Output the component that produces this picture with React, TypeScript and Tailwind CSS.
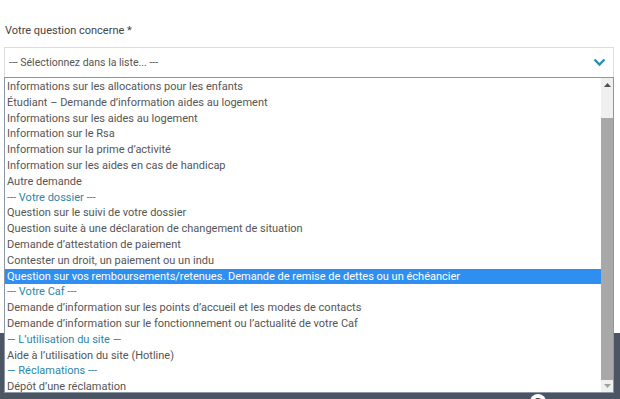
import React from "react";

type Item = { t: string; h?: boolean; sel?: boolean };

const items: Item[] = [
  { t: "Informations sur les allocations pour les enfants" },
  { t: "Étudiant – Demande d’information aides au logement" },
  { t: "Informations sur les aides au logement" },
  { t: "Information sur le Rsa" },
  { t: "Information sur la prime d’activité" },
  { t: "Information sur les aides en cas de handicap" },
  { t: "Autre demande" },
  { t: "--- Votre dossier ---", h: true },
  { t: "Question sur le suivi de votre dossier" },
  { t: "Question suite à une déclaration de changement de situation" },
  { t: "Demande d’attestation de paiement" },
  { t: "Contester un droit, un paiement ou un indu" },
  { t: "Question sur vos remboursements/retenues. Demande de remise de dettes ou un échéancier", sel: true },
  { t: "--- Votre Caf ---", h: true },
  { t: "Demande d’information sur les points d’accueil et les modes de contacts" },
  { t: "Demande d’information sur le fonctionnement ou l’actualité de votre Caf" },
  { t: "— L’utilisation du site —", h: true },
  { t: "Aide à l’utilisation du site (Hotline)" },
  { t: "— Réclamations ---", h: true },
  { t: "Dépôt d’une réclamation" },
];

export default function App() {
  return (
    <div
      className="relative w-[620px] h-[399px] overflow-hidden bg-white flex flex-col"
      style={{ fontFamily: "Roboto, 'Noto Sans', sans-serif" }}
    >
      <div className="h-[333px] bg-white flex flex-col pt-[22px] px-[4px]">
        <div className="pl-[1px] text-[11px] leading-[17px] text-[#444]">Votre question concerne *</div>
        <div className="mt-[8px] w-[610px] h-[31px] border border-[#dcdcdc] border-b-[#8a9bb0] flex items-center justify-between pl-[4px] pr-[7px] text-[10.5px] text-[#555]">
          <span>--- Sélectionnez dans la liste... ---</span>
          <svg width="13" height="9" viewBox="0 0 13 9">
            <path d="M1.5 1.5 L6.5 6.5 L11.5 1.5" fill="none" stroke="#2c8db0" strokeWidth="2.4" />
          </svg>
        </div>
      </div>
      <div className="flex-1 bg-[#4b5563]" />
      <div className="absolute left-[530px] top-[394px] w-[16px] h-[16px] rounded-full bg-white flex items-center justify-center">
        <div className="w-[8px] h-[8px] rounded-full bg-[#333]" />
      </div>
      <div className="absolute left-[4px] top-[77px] w-[610px] h-[316px] bg-white border border-[#8a96a3] flex">
        <div className="flex-1 flex flex-col pt-[1px]">
          {items.map((it, i) => (
            <div
              key={i}
              className={
                "h-[15.8px] leading-[15.8px] pl-[2px] text-[11px] whitespace-nowrap " +
                (it.sel ? "bg-[#2f8ff0] text-white" : it.h ? "text-[#2a87a8]" : "text-[#555]")
              }
            >
              {it.t}
            </div>
          ))}
        </div>
        <div className="w-[12px] bg-[#f0f0f0] flex flex-col items-center">
          <div className="h-[14px] flex items-center justify-center">
            <svg width="7" height="4" viewBox="0 0 7 4"><path d="M0 4 L3.5 0 L7 4 Z" fill="#505050" /></svg>
          </div>
          <div className="mt-[26px] w-[12px] h-[262px] bg-[#a8a8a8]" />
          <div className="flex-1 flex items-center justify-center">
            <svg width="7" height="4" viewBox="0 0 7 4"><path d="M0 0 L7 0 L3.5 4 Z" fill="#a0a0a0" /></svg>
          </div>
        </div>
      </div>
    </div>
  );
}
